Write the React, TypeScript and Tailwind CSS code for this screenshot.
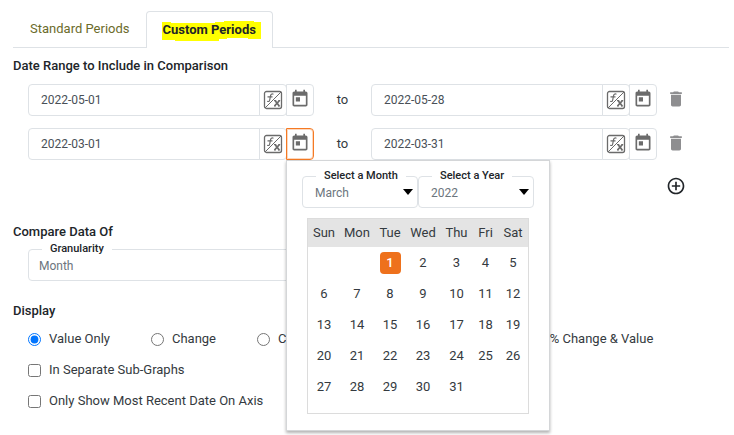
import type { ReactNode } from "react";

const FxIcon = () => (
  <svg width="20" height="20" viewBox="0 0 20 20" fill="none" stroke="#6b6b6b" strokeWidth="1.3">
    <rect x="1.5" y="1.5" width="17" height="17" rx="2" />
    <path d="M2 18 18 2" strokeWidth="1" />
    <path d="M10.500 4.200c-1.800-.6-2.700 0-3 1.600L6.700 10c-.3 1.500-1 1.700-2.500 1.300M4.500 6.800h5" strokeWidth="1.200" />
    <path d="m12 10.500 4.200 5.500M16.500 10.500 11.500 16" strokeWidth="1.800" />
    <path d="M11 10.500h2.200M15 16h2.200M15.500 10.500h1.700M11 16h1.700" strokeWidth="1" />
  </svg>
);

const CalendarIcon = () => (
  <svg width="20" height="20" viewBox="0 0 24 24" fill="#6b6b6b">
    <path d="M19 3h-1V1h-2v2H8V1H6v2H5c-1.110 0-1.990.9-1.990 2L3 19c0 1.100.89 2 2 2h14c1.100 0 2-.9 2-2V5c0-1.100-.9-2-2-2zm0 16H5V8h14v11zM7 10h5v5H7z" />
  </svg>
);

const TrashIcon = () => (
  <svg width="20" height="20" viewBox="0 0 24 24" fill="#8e8e90">
    <path d="M6 19c0 1.100.9 2 2 2h8c1.100 0 2-.9 2-2V7H6v12zM19 4h-3.500l-1-1h-5l-1 1H5v2h14V4z" />
  </svg>
);

const AddIcon = () => (
  <svg width="20" height="20" viewBox="0 0 24 24" fill="#212529">
    <path d="M13 7h-2v4H7v2h4v4h2v-4h4v-2h-4V7zm-1-5C6.480 2 2 6.480 2 12s4.480 10 10 10 10-4.480 10-10S17.520 2 12 2zm0 18c-4.410 0-8-3.590-8-8s3.590-8 8-8 8 3.590 8 8-3.590 8-8 8z" />
  </svg>
);

function DateField({ label, value, open, children }: { label: string; value: string; open?: boolean; children?: ReactNode }) {
  return (
    <div className="flex h-8 min-w-0 flex-1">
      <input
        aria-label={label}
        defaultValue={value}
        className="w-0 min-w-0 flex-1 rounded-l border border-[#dee2e6] pl-3 text-xs text-[#495057] outline-none"
      />
      <button aria-label="Formula" className="-ml-px flex w-7 items-center justify-center rounded-r border border-[#dee2e6]">
        <FxIcon />
      </button>
      <div className="relative -ml-px">
        <button
          aria-label="Open calendar"
          className={
            "flex h-8 w-7 items-start justify-center rounded-r border pt-1 " +
            (open ? "border-[#f57a24] inset-ring inset-ring-[#f57a24]/30" : "border-[#dee2e6]")
          }
        >
          <CalendarIcon />
        </button>
        {children}
      </div>
    </div>
  );
}

function SelectBox({ id, label, value, options, arrow }: { id: string; label: string; value: string; options: string[]; arrow?: boolean }) {
  return (
    <fieldset className="relative min-w-0 flex-1 rounded border border-[#dee2e6] pb-1">
      <legend className="ml-[13px] px-2 text-[11px] leading-[14px] font-medium text-[#212529]">
        <label htmlFor={id}>{label}</label>
      </legend>
      <select
        id={id}
        defaultValue={value}
        className={"block h-5 w-full appearance-none text-xs text-[#6c757d] outline-none " + (arrow ? "pl-3" : "pl-[10px]")}
      >
        {options.map((o) => (
          <option key={o}>{o}</option>
        ))}
      </select>
      {arrow && (
        <svg className="pointer-events-none absolute right-1 bottom-3" width="10" height="6" viewBox="0 0 10 6">
          <path d="M0 0h10L5 6z" />
        </svg>
      )}
    </fieldset>
  );
}

const weekdays = ["Sun", "Mon", "Tue", "Wed", "Thu", "Fri", "Sat"];
const months = ["January", "February", "March", "April", "May", "June", "July", "August", "September", "October", "November", "December"];
const weeks = [0, 1, 2, 3, 4].map((w) => weekdays.map((_, d) => w * 7 + d - 1));

function CalendarPopover() {
  return (
    <div className="absolute top-full left-0 z-10 w-[264px] border border-[#d4d6d8] bg-white px-[15px] pt-2 pb-4 shadow-[0_2px_3px_rgba(0,0,0,0.3)]">
      <div className="flex">
        <SelectBox id="month" label="Select a Month" value="March" options={months} arrow />
        <SelectBox id="year" label="Select a Year" value="2022" options={["2021", "2022", "2023"]} arrow />
      </div>
      <div className="mx-[5px] mt-[10px] border border-[#dcdcdc] pb-[11px]">
        <table className="w-full table-fixed text-center">
          <colgroup>
            <col className="w-8" />
            <col className="w-[34px]" />
            <col className="w-8" />
            <col className="w-[34px]" />
            <col className="w-[33px]" />
            <col className="w-[25px]" />
            <col />
          </colgroup>
          <thead className="bg-[#e4e4e4]">
            <tr>
              {weekdays.map((d) => (
                <th key={d} className="h-7 p-0 font-normal">{d}</th>
              ))}
            </tr>
          </thead>
          <tbody>
            {weeks.map((week, i) => (
              <tr key={i}>
                {week.map((day) => (
                  <td key={day} className="h-[31px] p-0">
                    {day > 0 && day < 32 && (
                      <button className={day === 1 ? "h-[22px] w-[21px] rounded bg-[#ee711c] font-medium text-white" : "h-[22px] w-[21px]"}>
                        {day}
                      </button>
                    )}
                  </td>
                ))}
              </tr>
            ))}
          </tbody>
        </table>
      </div>
    </div>
  );
}

function RangeRow({ from, to, open }: { from: string; to: string; open?: boolean }) {
  return (
    <div className="flex items-center">
      <DateField label="Start date" value={from} open={open}>
        {open && <CalendarPopover />}
      </DateField>
      <span className="w-[57px] text-center">to</span>
      <DateField label="End date" value={to} />
      <button aria-label="Delete range" className="flex w-[38px] justify-center pb-0.5">
        <TrashIcon />
      </button>
    </div>
  );
}

export default function App() {
  return (
    <main className="overflow-hidden bg-white pt-[11px] pr-[5px] pb-6 pl-[13px] font-[Roboto,sans-serif] text-[13px] leading-5 text-[#343a40]">
      <nav className="flex h-[37px] border-b border-[#dee2e6]">
        <button className="pr-4 pl-[17px] text-[#6b6b2a]">Standard Periods</button>
        <button className="relative -mb-px rounded-t border border-b-0 border-[#dee2e6] bg-white px-4 font-bold text-[#212529]">
          <svg className="absolute top-2 left-[15px]" width="99" height="22" viewBox="0 0 99 22" fill="#ffff00">
            <path d="M0 2h9v1h44V2h9V1h30v1h7v17H86v-1H65v1H57v2H13v-1H0z" />
          </svg>
          <span className="relative">Custom Periods</span>
        </button>
      </nav>

      <h2 className="mt-2 font-medium text-[#212529]">Date Range to Include in Comparison</h2>
      <div className="mt-2 flex flex-col gap-3 pr-[34px] pl-[15px]">
        <RangeRow from="2022-05-01" to="2022-05-28" />
        <RangeRow from="2022-03-01" to="2022-03-31" open />
        <button aria-label="Add range" className="mt-1 flex w-[38px] justify-center self-end">
          <AddIcon />
        </button>
      </div>

      <h2 className="mt-[26px] font-medium text-[#212529]">Compare Data Of</h2>
      <div className="flex w-3/5 pl-[15px]">
        <SelectBox id="granularity" label="Granularity" value="Month" options={["Day", "Week", "Month"]} />
      </div>

      <h2 className="mt-5 font-medium text-[#212529]">Display</h2>
      <div className="mt-2 flex flex-col gap-[11px] pl-[15px]">
        <div className="flex gap-[41px] whitespace-nowrap">
          {["Value Only", "Change", "Change & Value", "% Change", "% Change & Value"].map((name, i) => (
            <label key={name} className="flex items-center gap-2">
              <input type="radio" name="display" defaultChecked={i === 0} className="size-[13px]" />
              {name}
            </label>
          ))}
        </div>
        {["In Separate Sub-Graphs", "Only Show Most Recent Date On Axis"].map((name) => (
          <label key={name} className="flex items-center gap-2 self-start">
            <input type="checkbox" className="size-[13px]" />
            {name}
          </label>
        ))}
      </div>
    </main>
  );
}
